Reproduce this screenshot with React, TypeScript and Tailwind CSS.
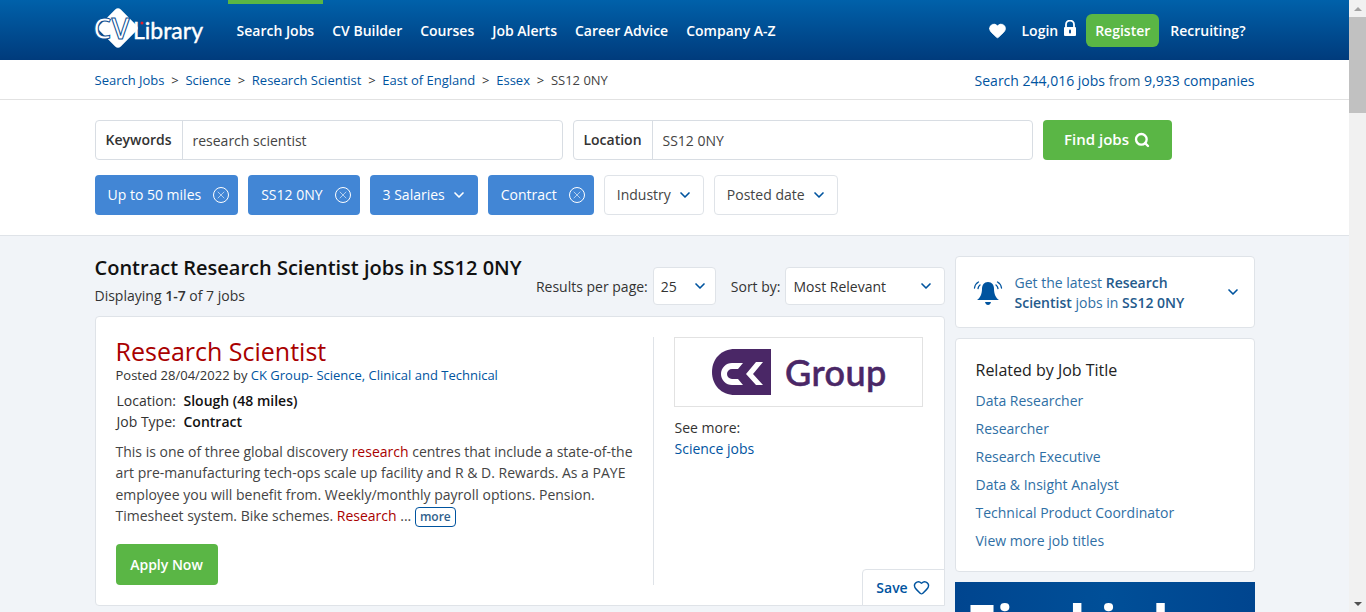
import { ChevronDown, Heart, Search, X } from "lucide-react";

const font = { fontFamily: '"Open Sans", sans-serif' };

const navItems = ["Search Jobs", "CV Builder", "Courses", "Job Alerts", "Career Advice", "Company A-Z"];
const crumbs = ["Search Jobs", "Science", "Research Scientist", "East of England", "Essex"];
const related = [
  "Data Researcher",
  "Researcher",
  "Research Executive",
  "Data & Insight Analyst",
  "Technical Product Coordinator",
  "View more job titles",
];

function Logo() {
  return (
    <svg width="112" height="52" viewBox="0 0 112 52" className="shrink-0">
      <rect x="11" y="9" width="30" height="30" rx="4" fill="#fff" transform="rotate(45 26 24)" />
      <text x="1" y="35" fontSize="29" fontWeight="600" fill="#fff" stroke="#0a4f94" strokeWidth="1" fontFamily="Open Sans">
        CV
      </text>
      <text x="41" y="35" fontSize="23" fill="#fff" fontFamily="Lato" textLength="70" lengthAdjust="spacingAndGlyphs" stroke="#fff" strokeWidth="0.4">
        Library
      </text>
      <circle cx="50" cy="19" r="1.500" fill="#e0202c" />
    </svg>
  );
}

function LockIcon() {
  return (
    <svg width="14" height="17" viewBox="0 0 14 17" className="ml-[5px] mb-[3px]">
      <path d="M3 7V4.500a4 4 0 0 1 8 0V7" fill="none" stroke="#fff" strokeWidth="1.800" />
      <path d="M2 7h10a1 1 0 0 1 1 1v7a1 1 0 0 1-1 1H2a1 1 0 0 1-1-1V8a1 1 0 0 1 1-1z" fill="#fff" />
      <rect x="6" y="9.500" width="2" height="4" rx="1" fill="#0a4f94" />
    </svg>
  );
}

function ClearIcon() {
  return (
    <span className="flex size-[16px] items-center justify-center rounded-full border border-white">
      <X size={12} strokeWidth={1.2} />
    </span>
  );
}

function Chip({ label, clear }: { label: string; clear?: boolean }) {
  return (
    <div className={`flex h-10 items-center rounded bg-[#4286d5] pl-[13px] text-[14px] text-white ${clear ? "gap-[12px] pr-[9px]" : "gap-[6px] pr-[11px]"}`}>
      <span className="mt-[-2px]">{label}</span>
      {clear ? <ClearIcon /> : <ChevronDown size={16} strokeWidth={2.5} />}
    </div>
  );
}

function FilterButton({ label }: { label: string }) {
  return (
    <div className="flex h-10 items-center gap-[6px] rounded border border-[#dfe3e8] bg-white pl-3 pr-[10px] text-[14px] text-[#444]">
      <span className="mt-[-2px]">{label}</span>
      <ChevronDown size={16} strokeWidth={2.5} className="text-[#00549f]" />
    </div>
  );
}

function BellIcon() {
  return (
    <svg width="30" height="30" viewBox="0 0 30 30" fill="none" className="shrink-0">
      <path d="M15 5c-4 0-6 3-6 7 0 5-2 9-5 11h22c-3-2-5-6-5-11 0-4-2-7-6-7z" fill="#00549f" />
      <path d="M12 25h6c-.5 2-1.500 3-3 3s-2.500-1-3-3z" fill="#00549f" />
      <path d="M1.500 11c.5-3 2-5 4-6M5 11.500c.3-1.500 1-2.700 2-3.500M28.500 11c-.5-3-2-5-4-6M25 11.500c-.3-1.500-1-2.700-2-3.500" stroke="#00549f" strokeWidth="1.300" strokeLinecap="round" />
    </svg>
  );
}

function CkLogo() {
  return (
    <svg width="176" height="48" viewBox="0 0 176 48">
      <path d="M25 1h36v46H25C11 47 2 37 2 24S11 1 25 1z" fill="#4a2766" />
      <path d="M33 15H22a11 11 0 0 0 0 22h11l-5-6h-6a5 5 0 0 1 0-10h6z" fill="#fff" />
      <path d="M53 14h-7L36 26l10 11h7L43 26z" fill="#fff" />
      <text x="75" y="38" fontSize="36" fontWeight="500" fill="#4a2766" stroke="#4a2766" strokeWidth="0.600" fontFamily="Lato" letterSpacing="0.500">
        Group
      </text>
    </svg>
  );
}

export default function App() {
  return (
    <div className="flex h-[612px] w-full overflow-hidden bg-[#f1f4f8] text-[14px] text-[#333]" style={font}>
      <div className="min-w-0 flex-1">
        <header className="h-[60px] bg-gradient-to-b from-[#0061aa] to-[#003b7c]">
          <div className="mx-auto flex h-full w-[1160px] items-center">
            <div className="ml-[-3px] mr-[24px]">
              <Logo />
            </div>
            <nav className="flex h-full">
              {navItems.map((item, i) => (
                <div
                  key={item}
                  className={`flex h-full items-center border-t-4 px-[9px] text-[14px] font-semibold text-white ${i === 0 ? "border-[#5ab645]" : "border-transparent"}`}
                >
                  <span className="mt-[-4px]">{item}</span>
                </div>
              ))}
            </nav>
            <div className="ml-auto flex items-center text-[14px] font-semibold text-white">
              <Heart size={19} fill="#fff" strokeWidth={1} />
              <span className="ml-[15px]">Login</span>
              <LockIcon />
              <span className="ml-[9px] flex h-[33px] w-[73px] items-center justify-center rounded-md bg-[#5ab645]">Register</span>
              <span className="ml-[11px] mr-[9px]">Recruiting?</span>
            </div>
          </div>
        </header>

        <div className="border-b border-[#e2e2e2] bg-white">
          <div className="mx-auto flex h-[39px] w-[1160px] items-center justify-between pt-[2px] text-[13px] text-[#00549f]">
            <div className="flex items-center">
              {crumbs.map((c) => (
                <span key={c} className="flex items-center">
                  {c}
                  <span className="mx-[6.75px] text-[#333]">&gt;</span>
                </span>
              ))}
              <span className="text-[#444]">SS12 0NY</span>
            </div>
            <div className="text-[14px]">
              Search 244,016 jobs <span className="text-[#2f5f8c]">from</span> 9,933 companies
            </div>
          </div>
        </div>

        <div className="border-b border-[#dfe3e8] bg-white">
          <div className="mx-auto w-[1160px] pb-5 pt-5">
            <div className="flex">
              <div className="flex h-10 w-[468px] rounded border border-[#d8dde3]">
                <div className="flex w-[87px] items-center justify-center border-r border-[#d8dde3] pb-[2px] font-semibold">Keywords</div>
                <div className="flex items-center pl-[10px] text-[#444]">research scientist</div>
              </div>
              <div className="ml-[10px] flex h-10 w-[460px] rounded border border-[#d8dde3]">
                <div className="flex w-[79px] items-center justify-center border-r border-[#d8dde3] pb-[2px] font-semibold">Location</div>
                <div className="flex items-center pl-[10px] text-[#444]">SS12 0NY</div>
              </div>
              <div className="ml-[10px] flex h-10 w-[129px] items-center justify-center gap-[5px] rounded bg-[#5ab645] pb-[1px] text-[15px] font-semibold text-white">
                Find jobs
                <Search size={16} strokeWidth={3.5} />
              </div>
            </div>
            <div className="mt-[15px] flex gap-[10px]">
              <Chip label="Up to 50 miles" clear />
              <Chip label="SS12 0NY" clear />
              <Chip label="3 Salaries" />
              <Chip label="Contract" clear />
              <FilterButton label="Industry" />
              <FilterButton label="Posted date" />
            </div>
          </div>
        </div>

        <div className="mx-auto flex w-[1160px] gap-[10px] pt-5">
          <main className="w-[850px] shrink-0">
            <div className="flex h-[60px] items-start justify-between">
              <div>
                <h1 className="text-[20px] font-semibold leading-[24px] text-[#111]">Contract Research Scientist jobs in SS12 0NY</h1>
                <p className="mt-[6px] text-[14px] leading-[20px]">
                  Displaying <b className="font-semibold">1-7</b> of 7 jobs
                </p>
              </div>
              <div className="mt-[11px] flex items-center text-[14px]">
                <span className="mr-[5px]">Results per page:</span>
                <div className="flex h-[38px] w-[63px] items-center justify-between rounded border border-[#dfe3e8] bg-white px-[7px]">
                  25
                  <ChevronDown size={16} strokeWidth={2.5} className="text-[#00549f]" />
                </div>
                <span className="ml-[15px] mr-[4px]">Sort by:</span>
                <div className="flex h-[38px] w-[160px] items-center justify-between rounded border border-[#dfe3e8] bg-white pl-2 pr-[10px]">
                  Most Relevant
                  <ChevronDown size={16} strokeWidth={2.5} className="text-[#00549f]" />
                </div>
              </div>
            </div>

            <article className="relative flex h-[290px] rounded border border-[#dfe3e8] bg-white pb-5 pt-5">
              <div className="w-[558px] border-r border-[#dfe3e8] pl-5 pr-4">
                <h2 className="text-[25px] font-normal leading-[29px] text-[#a90000]">Research Scientist</h2>
                <p className="text-[13px] leading-[18px]">
                  Posted 28/04/2022 by <span className="text-[#00549f]">CK Group- Science, Clinical and Technical</span>
                </p>
                <div className="mt-[6px] pl-[1px] leading-[21px]">
                  <div className="flex">
                    <span className="w-[67px]">Location:</span>
                    <b className="font-semibold text-[#111]">Slough (48 miles)</b>
                  </div>
                  <div className="flex">
                    <span className="w-[67px]">Job Type:</span>
                    <b className="font-semibold text-[#111]">Contract</b>
                  </div>
                </div>
                <p className="mt-[9px] leading-[21.3px] text-[#444]">
                  This is one of three global discovery <span className="text-[#a90000]">research</span> centres that include a state-of-the art pre-manufacturing tech-ops scale up facility and R &amp; D. Rewards. As a PAYE employee you will benefit from. Weekly/monthly payroll options. Pension. Timesheet system. Bike schemes. <span className="text-[#a90000]">Research</span> ...{" "}
                  <span className="inline-block rounded border border-[#00549f] px-[4px] align-middle text-[12px] font-semibold leading-[18px] text-[#2f5f8c]">more</span>
                </p>
                <div className="mt-[17px] flex h-[41px] w-[102px] items-center justify-center rounded bg-[#5ab645] font-semibold text-white">
                  Apply Now
                </div>
              </div>
              <div className="pl-5">
                <div className="flex h-[70px] w-[249px] items-center justify-center border border-[#e2e2e2]">
                  <CkLogo />
                </div>
                <p className="ml-[1px] mt-[10px] leading-[21px]">See more:</p>
                <p className="ml-[1px] leading-[21px] text-[#00549f]">Science jobs</p>
              </div>
              <div className="absolute bottom-[-1px] right-[-1px] flex h-[37px] w-[83px] items-center justify-center gap-[5px] rounded-tl border border-[#dfe3e8] bg-white font-semibold text-[#00549f]">
                Save
                <Heart size={17} strokeWidth={2} />
              </div>
            </article>
          </main>

          <aside className="w-[300px] shrink-0">
            <div className="flex h-[72px] items-center rounded border border-[#dfe3e8] bg-white pl-[17px] pr-[13px]">
              <BellIcon />
              <p className="ml-[12px] mt-[2px] w-[190px] leading-[20px] text-[#2f6fa5]">
                Get the latest <b className="font-semibold text-[#245a8c]">Research Scientist</b> jobs in <b className="font-semibold text-[#245a8c]">SS12 0NY</b>
              </p>
              <ChevronDown size={16} strokeWidth={2.5} className="ml-auto text-[#00549f]" />
            </div>
            <div className="mt-[10px] h-[234px] rounded border border-[#dfe3e8] bg-white px-5 pt-[19px]">
              <h3 className="text-[16px] leading-[24px] text-[#222]">Related by Job Title</h3>
              <ul className="mt-[5px] text-[#2f6fa5]">
                {related.map((r) => (
                  <li key={r} className="h-[28px] leading-[28px]">
                    {r}
                  </li>
                ))}
              </ul>
            </div>
            <div className="mt-[10px] h-[120px] overflow-hidden bg-gradient-to-r from-[#00458f] via-[#004f98] to-[#00458f] pl-[11px] pt-[13px] text-[56px] font-bold leading-[56px] text-white">
              Find jobs
            </div>
          </aside>
        </div>
      </div>

      <div className="flex w-[17px] shrink-0 flex-col items-center bg-[#f1f1f1]">
        <div className="flex h-[17px] items-center justify-center text-[#a3a3a3]">
          <span className="border-x-[4px] border-b-[4px] border-x-transparent border-b-current" />
        </div>
        <div className="h-[96px] w-full bg-[#c1c1c1]" />
        <div className="flex-1" />
        <div className="flex h-[17px] items-center justify-center text-[#505050]">
          <span className="border-x-[4px] border-t-[4px] border-x-transparent border-t-current" />
        </div>
      </div>
    </div>
  );
}
